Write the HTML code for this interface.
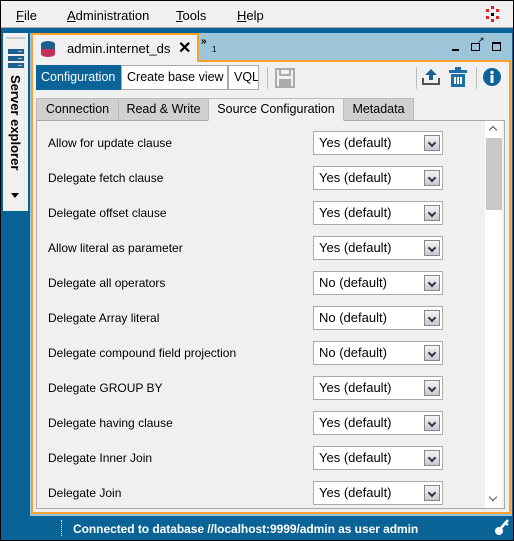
<!DOCTYPE html>
<html><head><style>
*{box-sizing:border-box;margin:0;padding:0}
body{width:514px;height:541px;overflow:hidden;font-family:"Liberation Sans",Arial,sans-serif;font-size:12px;color:#000;background:#0a6397;position:relative}
.abs{position:absolute}
#frame{position:absolute;left:0;top:0;width:514px;height:541px;border:1px solid #000;pointer-events:none}
#menu{left:0;top:0;width:514px;height:28px;background:#f0f0f0;border-bottom:1px solid #aaa}
#menu span{position:absolute;top:8px;font-size:13px}
#side{left:3px;top:33px;width:25px;height:178px;background:#f0f0f0}
#main{left:30px;top:33px;width:482px;height:483px;background:#9dc5da}
#content{left:31px;top:60px;width:480px;height:454px;background:#f0f0f0;border:2px solid #f7a030}
#tab{left:31px;top:33px;width:168px;height:29px;background:#f0f0f0;border:2px solid #f7a030;border-bottom:none}
.tb{position:absolute;top:65px;height:25px;border:1px solid #aaa;background:#fff;font-size:12.5px;line-height:23px;padding-left:5px;white-space:nowrap;overflow:hidden}
.st{position:absolute;top:98px;height:23px;border:1px solid #bbb;background:#d0d0d0;font-size:12.5px;line-height:21px;text-align:center;white-space:nowrap}
#panel{left:36px;top:120px;width:469px;height:389px;background:#f0f0f0;border:1px solid #aaa}
.lbl{position:absolute;left:48px;font-size:12px}
.dd{position:absolute;left:313px;width:130px;height:24px;background:#fff;border:1px solid #aaa;font-size:13px;line-height:22px;padding-left:5px}
.dd i{position:absolute;right:2px;top:3px;width:16px;height:16px;border:1px solid #888;background:linear-gradient(#f4f4f8,#c8c8d4)}
.dd i:after{content:"";position:absolute;left:4px;top:4px;width:4px;height:4px;border-right:2px solid #333;border-bottom:2px solid #333;transform:rotate(45deg)}
.chev{position:absolute;left:490px;width:6px;height:6px;border-right:1.5px solid #555;border-bottom:1.5px solid #555}
</style></head><body>
<div id="menu" class="abs">
<span style="left:16px"><u>F</u>ile</span>
<span style="left:67px"><u>A</u>dministration</span>
<span style="left:176px"><u>T</u>ools</span>
<span style="left:237px"><u>H</u>elp</span>
<svg class="abs" style="left:484px;top:6px" width="16" height="16"><g fill="#e02020"><rect x="7" y="0" width="3" height="3"/><rect x="7" y="13" width="3" height="3"/><rect x="2" y="3" width="3" height="3"/><rect x="12" y="3" width="3" height="3"/><rect x="2" y="10" width="3" height="3"/><rect x="12" y="10" width="3" height="3"/></g><rect x="7" y="7" width="3" height="3" fill="#000"/></svg>
</div>
<div id="side" class="abs">
<div class="abs" style="left:3px;top:4px;width:19px;height:2px;background:#ccc"></div>
<svg class="abs" style="left:5px;top:16px" width="16" height="20"><g fill="#1d5f8f"><rect y="0" width="16" height="5"/><rect y="7" width="16" height="5"/><rect y="14" width="16" height="5"/></g><g fill="#9fc5e0"><rect x="10" y="2" width="4" height="1"/><rect x="10" y="9" width="4" height="1"/><rect x="10" y="16" width="4" height="1"/></g></svg>
<div class="abs" style="left:20px;top:42px;transform:rotate(90deg);transform-origin:0 0;font-weight:bold;font-size:13px;white-space:nowrap">Server explorer</div>
<div class="abs" style="left:8px;top:160px;width:0;height:0;border-left:4px solid transparent;border-right:4px solid transparent;border-top:5px solid #000"></div>
</div>
<div id="main" class="abs"></div>
<div id="content" class="abs"></div>
<div id="tab" class="abs">
<svg class="abs" style="left:8px;top:6px" width="14" height="16"><ellipse cx="7" cy="3" rx="7" ry="3" fill="#1d5f8f"/><rect x="0" y="3" width="14" height="5" fill="#1d5f8f"/><rect x="0" y="8" width="14" height="5" fill="#c0305a"/><ellipse cx="7" cy="13" rx="7" ry="3" fill="#c0305a"/></svg>
<span class="abs" style="left:34px;top:6px;font-size:13px">admin.internet_ds</span>
<span class="abs" style="left:145px;top:3px;font-size:16px;font-weight:bold">✕</span>
</div>
<span class="abs" style="left:201px;top:36px;font-size:10px;font-weight:bold">»</span>
<span class="abs" style="left:212px;top:45px;font-size:8px">1</span>
<div class="abs" style="left:452px;top:49px;width:7px;height:2px;background:#000"></div>
<div class="abs" style="left:471px;top:43px;width:9px;height:8px;border:1.5px solid #000"></div>
<span class="abs" style="left:477px;top:35px;font-size:9px">↗</span>
<div class="abs" style="left:492px;top:42px;width:9px;height:9px;border:1.5px solid #000;border-top-width:2.5px"></div>
<div class="tb" style="left:36px;width:85px;background:#0b6497;color:#fff;border-color:#0b6497;padding-left:4px">Configuration</div>
<div class="tb" style="left:121px;width:107px">Create base view</div>
<div class="tb" style="left:228px;width:31px">VQL</div>
<div class="abs" style="left:267px;top:67px;width:1px;height:22px;background:#bbb"></div>
<svg class="abs" style="left:275px;top:68px" width="20" height="20"><rect x="1" y="1" width="18" height="18" fill="none" stroke="#aaa" stroke-width="2"/><rect x="5" y="1" width="10" height="6" fill="none" stroke="#aaa" stroke-width="2"/><rect x="4" y="11" width="12" height="8" fill="#aaa"/></svg>
<div class="abs" style="left:416px;top:67px;width:1px;height:22px;background:#bbb"></div>
<svg class="abs" style="left:422px;top:68px" width="18" height="18"><path d="M9 1 L3 7 H7 V12 H11 V7 H15 Z" fill="#1d5f8f"/><path d="M1 10 V16 H17 V10" fill="none" stroke="#555" stroke-width="2"/></svg>
<svg class="abs" style="left:449px;top:67px" width="18" height="20"><rect x="6" y="0" width="6" height="3" fill="#1d6fa8"/><rect x="0" y="3" width="18" height="3" fill="#1d6fa8"/><rect x="2" y="7" width="14" height="13" fill="#1d6fa8"/><g fill="#fff"><rect x="5" y="10" width="2" height="7"/><rect x="8" y="10" width="2" height="7"/><rect x="11" y="10" width="2" height="7"/></g></svg>
<div class="abs" style="left:476px;top:67px;width:1px;height:22px;background:#bbb"></div>
<svg class="abs" style="left:483px;top:68px" width="18" height="18"><circle cx="9" cy="9" r="9" fill="#0b6497"/><rect x="7.5" y="7" width="3" height="8" fill="#fff"/><circle cx="9" cy="4.5" r="1.7" fill="#fff"/></svg>
<div class="st" style="left:36px;width:83px">Connection</div>
<div class="st" style="left:118px;width:91px">Read &amp; Write</div>
<div class="st" style="left:208px;width:136px;background:#f0f0f0;border-bottom-color:#f0f0f0;z-index:2">Source Configuration</div>
<div class="st" style="left:343px;width:71px">Metadata</div>
<div id="panel" class="abs"></div>
<div class="abs" style="left:485px;top:121px;width:17px;height:387px;background:#fff"></div>
<div class="abs" style="left:486px;top:138px;width:16px;height:72px;background:#c8c8c8"></div>
<div class="chev" style="top:127px;transform:rotate(-135deg)"></div>
<div class="chev" style="top:494px;transform:rotate(45deg)"></div>
<div class="lbl" style="top:136px">Allow for update clause</div><div class="dd" style="top:131px">Yes (default)<i></i></div>
<div class="lbl" style="top:171px">Delegate fetch clause</div><div class="dd" style="top:166px">Yes (default)<i></i></div>
<div class="lbl" style="top:206px">Delegate offset clause</div><div class="dd" style="top:201px">Yes (default)<i></i></div>
<div class="lbl" style="top:241px">Allow literal as parameter</div><div class="dd" style="top:236px">Yes (default)<i></i></div>
<div class="lbl" style="top:276px">Delegate all operators</div><div class="dd" style="top:271px">No (default)<i></i></div>
<div class="lbl" style="top:311px">Delegate Array literal</div><div class="dd" style="top:306px">No (default)<i></i></div>
<div class="lbl" style="top:346px">Delegate compound field projection</div><div class="dd" style="top:341px">No (default)<i></i></div>
<div class="lbl" style="top:381px">Delegate GROUP BY</div><div class="dd" style="top:376px">Yes (default)<i></i></div>
<div class="lbl" style="top:416px">Delegate having clause</div><div class="dd" style="top:411px">Yes (default)<i></i></div>
<div class="lbl" style="top:451px">Delegate Inner Join</div><div class="dd" style="top:446px">Yes (default)<i></i></div>
<div class="lbl" style="top:486px">Delegate Join</div><div class="dd" style="top:481px">Yes (default)<i></i></div>
<div class="abs" style="left:61px;top:520px;width:1px;height:16px;border-left:1px dotted #fff"></div>
<div class="abs" style="left:73px;top:522px;color:#fff;font-weight:bold;font-size:12px;letter-spacing:-0.05px">Connected to database //localhost:9999/admin as user admin</div>
<svg class="abs" style="left:494px;top:518px" width="16" height="18"><circle cx="5" cy="13" r="4" fill="#fff"/><path d="M7 10 L14 2" stroke="#fff" stroke-width="2.5"/><path d="M11 5 L14 7" stroke="#fff" stroke-width="2"/></svg>
<div id="frame"></div>
</body></html>
